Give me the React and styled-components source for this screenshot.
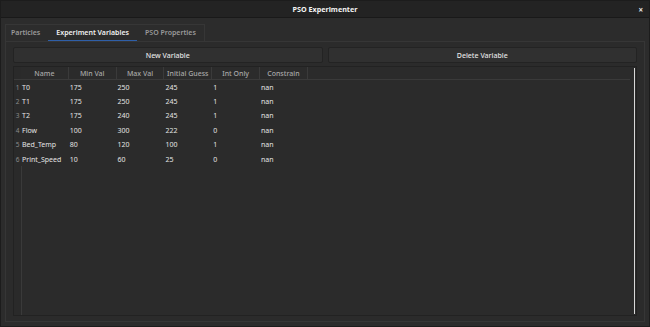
import React from "react";
import styled, { createGlobalStyle } from "styled-components";

const Global = createGlobalStyle`
  html, body {
    margin: 0;
    padding: 0;
    background: #2b2b2b;
  }
  body {
    font-family: "Noto Sans", "Open Sans", sans-serif;
    color: #e0e0e0;
  }
`;

const Window = styled.div`
  width: 650px;
  height: 327px;
  display: flex;
  flex-direction: column;
  background: #2c2c2c;
  box-sizing: border-box;
  border: 1px solid #1c1c1c;
`;

const TitleBar = styled.div`
  height: 16px;
  flex-shrink: 0;
  background: #232323;
  border-bottom: 1px solid #191919;
  display: flex;
  align-items: center;
  justify-content: center;
  position: relative;
  font-size: 7.2px;
  font-weight: 700;
  color: #f2f2f2;
`;

const Close = styled.span`
  position: absolute;
  right: 6px;
  top: 3px;
  font-size: 8px;
  font-weight: 700;
  color: #e8e8e8;
`;

const Body = styled.div`
  flex: 1;
  display: flex;
  flex-direction: column;
  padding: 6px 4px 4px 4px;
  min-height: 0;
`;

const TabBar = styled.div`
  display: flex;
  align-self: flex-start;
  height: 17px;
  box-sizing: border-box;
  border: 1px solid #363636;
  border-bottom: none;
`;

const Tab = styled.div`
  padding: 0 8px;
  display: flex;
  align-items: center;
  font-size: 7px;
  font-weight: 600;
  color: ${(p) => (p.$active ? "#f0f0f0" : "#9a9a9a")};
  border-bottom: 1px solid ${(p) => (p.$active ? "#2f5fa8" : "transparent")};
  box-sizing: border-box;
  &:first-child {
    padding-left: 5px;
  }
`;

const Pane = styled.div`
  flex: 1;
  min-height: 0;
  border: 1px solid #363636;
  background: #2b2b2b;
  padding: 5px 7px 5px 7px;
  display: flex;
  flex-direction: column;
  gap: 3px;
`;

const ButtonRow = styled.div`
  display: flex;
  gap: 5px;
`;

const Button = styled.div`
  flex: 1;
  height: 16px;
  box-sizing: border-box;
  background: #303030;
  border: 1px solid #232323;
  border-radius: 2px;
  display: flex;
  align-items: center;
  justify-content: center;
  font-size: 7px;
  font-weight: 500;
  color: #e6e6e6;
`;

const TableFrame = styled.div`
  flex: 1;
  min-height: 0;
  border: 1px solid #222;
  background: #2b2b2b;
  display: flex;
  position: relative;
`;

const Grid = styled.div`
  flex: 1;
  display: flex;
  flex-direction: column;
`;

const Row = styled.div`
  display: flex;
  height: ${(p) => (p.$header ? "12px" : "14.4px")};
  border-bottom: ${(p) => (p.$header ? "1px solid #3a3a3a" : "none")};
  margin-right: ${(p) => (p.$header ? "6px" : "0")};
`;

const RowNum = styled.div`
  width: 7px;
  flex-shrink: 0;
  display: flex;
  align-items: center;
  justify-content: center;
  font-size: 6.5px;
  color: #8a8a8a;
  background: #2a2a2a;
`;

const Cell = styled.div`
  width: 47.8px;
  flex-shrink: 0;
  box-sizing: border-box;
  display: flex;
  align-items: center;
  justify-content: ${(p) => (p.$header ? "center" : "flex-start")};
  padding-left: ${(p) => (p.$header ? "0" : "1px")};
  border-right: ${(p) => (p.$header ? "1px solid #3a3a3a" : "none")};
  font-size: 7px;
  font-weight: ${(p) => (p.$header ? 500 : 400)};
  color: ${(p) => (p.$header ? "#a8a8a8" : "#e4e4e4")};
  white-space: nowrap;
`;

const Spacer = styled.div`
  flex: 1;
  display: flex;
`;

const NumColumnFill = styled.div`
  width: 7px;
  border-right: 1px solid #3a3a3a;
  background: #2a2a2a;
`;

const Scrollbar = styled.div`
  position: absolute;
  right: 1px;
  top: 1px;
  bottom: 1px;
  width: 1px;
  background: #d8d8d8;
`;

const columns = ["Name", "Min Val", "Max Val", "Initial Guess", "Int Only", "Constrain"];

const rows = [
  ["T0", "175", "250", "245", "1", "nan"],
  ["T1", "175", "250", "245", "1", "nan"],
  ["T2", "175", "240", "245", "1", "nan"],
  ["Flow", "100", "300", "222", "0", "nan"],
  ["Bed_Temp", "80", "120", "100", "1", "nan"],
  ["Print_Speed", "10", "60", "25", "0", "nan"],
];

export default function App() {
  return (
    <>
      <Global />
      <Window>
        <TitleBar>
          PSO Experimenter
          <Close>×</Close>
        </TitleBar>
        <Body>
          <TabBar>
            <Tab>Particles</Tab>
            <Tab $active>Experiment Variables</Tab>
            <Tab>PSO Properties</Tab>
          </TabBar>
          <Pane>
            <ButtonRow>
              <Button>New Variable</Button>
              <Button>Delete Variable</Button>
            </ButtonRow>
            <TableFrame>
              <Grid>
                <Row $header>
                  <RowNum />
                  {columns.map((c) => (
                    <Cell key={c} $header>
                      {c}
                    </Cell>
                  ))}
                </Row>
                {rows.map((r, i) => (
                  <Row key={r[0]}>
                    <RowNum>{i + 1}</RowNum>
                    {r.map((v, j) => (
                      <Cell key={j}>{v}</Cell>
                    ))}
                  </Row>
                ))}
                <Spacer>
                  <NumColumnFill />
                </Spacer>
              </Grid>
              <Scrollbar />
            </TableFrame>
          </Pane>
        </Body>
      </Window>
    </>
  );
}
